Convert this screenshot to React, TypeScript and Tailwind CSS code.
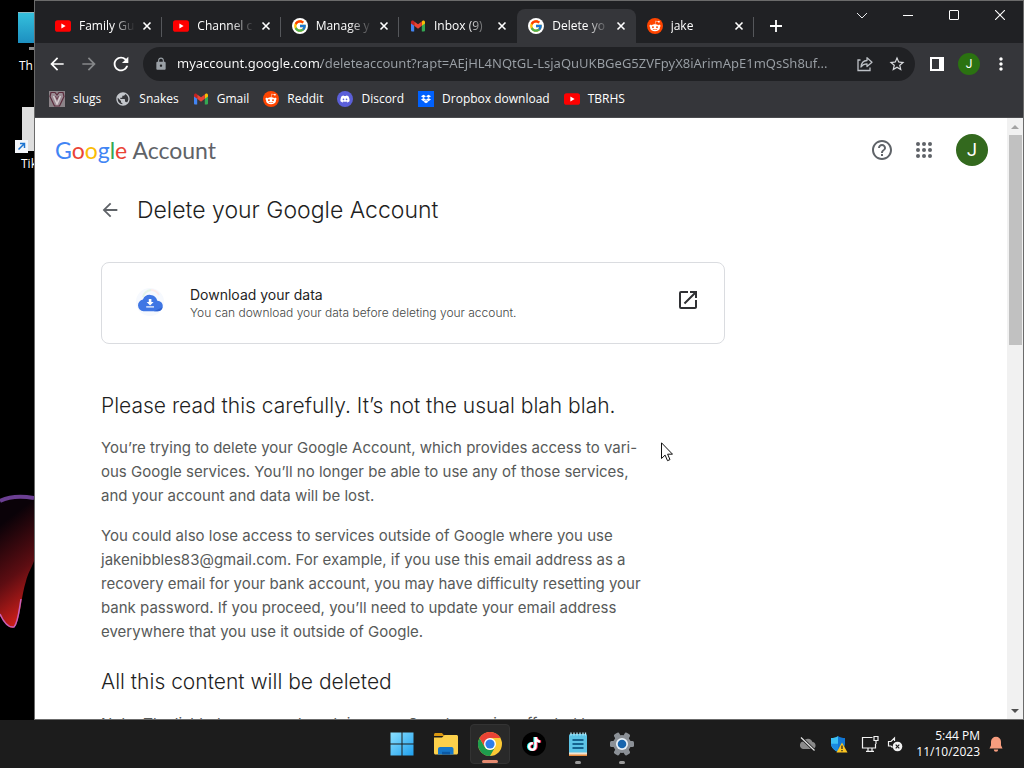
import { ReactNode } from 'react';
import { FcGoogle } from 'react-icons/fc';
import { FaDiscord, FaDropbox, FaTiktok, FaRedditAlien } from 'react-icons/fa';
import {
  MdArrowBack,
  MdArrowForward,
  MdHelpOutline,
  MdLock,
  MdMoreVert,
  MdOpenInNew,
  MdPublic,
  MdRefresh,
  MdStarBorder,
} from 'react-icons/md';

/* ---------- Icons ---------- */

function YouTubeIcon() {
  return (
    <svg viewBox="0 0 16 16" className="w-4 h-4 shrink-0">
      <rect x="0" y="2.2" width="16" height="11.6" rx="2.6" fill="#f00" />
      <path d="M6.4 5.6v4.8L10.6 8z" fill="#fff" />
    </svg>
  );
}

function GmailIcon() {
  return (
    <svg viewBox="0 0 16 16" className="w-4 h-4 shrink-0">
      <path d="M1 4.2V12.6c0 .5.4.9.9.9h2.3V7.2z" fill="#4285f4" />
      <path d="M11.8 13.5h2.3c.5 0 .9-.4.9-.9V4.2l-3.2 3z" fill="#34a853" />
      <path d="M11.8 3.4v4.4L15 5.4V4.1c0-1.3-1.4-2-2.4-1.3z" fill="#fbbc04" />
      <path d="M4.2 7.8V3.4L8 6.3l3.8-2.9v4.4L8 10.7z" fill="#ea4335" />
      <path d="M1 4.1v1.3l3.2 2.4V3.4l-.8-.6C2.4 2.1 1 2.8 1 4.1z" fill="#c5221f" />
    </svg>
  );
}

function RedditIcon() {
  return (
    <span className="flex w-4 h-4 shrink-0 items-center justify-center rounded-full bg-[#ff4500]">
      <FaRedditAlien className="w-3 h-3 text-white" />
    </span>
  );
}

function GoogleIcon() {
  return (
    <span className="flex w-4 h-4 shrink-0 items-center justify-center rounded-full bg-white">
      <FcGoogle className="w-[14px] h-[14px]" />
    </span>
  );
}

function DiscordIcon() {
  return (
    <span className="flex w-4 h-4 shrink-0 items-center justify-center rounded-full bg-[#5b5fd9]">
      <FaDiscord className="w-[10px] h-[10px] text-white" />
    </span>
  );
}

function DropboxIcon() {
  return (
    <span className="flex w-4 h-4 shrink-0 items-center justify-center bg-[#0061fe]">
      <FaDropbox className="w-[10px] h-[10px] text-white" />
    </span>
  );
}

function SlugsIcon() {
  return (
    <svg viewBox="0 0 16 16" className="w-4 h-4 shrink-0">
      <rect width="16" height="16" fill="#8b8388" />
      <path d="M2 1.5h4L8 4l2-2.5h4l1 4L10.5 15h-5L1 5.5z" fill="#9a8c94" stroke="#5c2c3c" strokeWidth="1.2" />
      <path d="M4.5 5 8 13l3.5-8" fill="none" stroke="#d8ccd0" strokeWidth="1.5" />
      <path d="M6.5 5 8 8.5 9.5 5" fill="none" stroke="#6e3f50" />
    </svg>
  );
}

function CloseIcon() {
  return (
    <svg viewBox="0 0 10 10" className="w-[10px] h-[10px]">
      <path d="M1.5 1.5l7 7M8.5 1.5l-7 7" stroke="#fff" strokeWidth="1.6" />
    </svg>
  );
}

function ShareIcon() {
  return (
    <svg viewBox="0 0 16 16" className="w-4 h-4" fill="none" stroke="#bdc1c6" strokeWidth="1.3">
      <path d="M3.5 4H1v10.5h12V11.5" />
      <path d="M10 1.8v2.7C6.5 4.7 4.3 7 4 11c1.5-2.3 3.3-3.2 6-3.2v2.7L15 6.2z" strokeLinejoin="round" />
    </svg>
  );
}

function CloudDownloadIcon() {
  return (
    <svg viewBox="0 0 40 40" className="w-10 h-10 shrink-0">
      <circle cx="20" cy="19" r="14" fill="#f6f9fe" />
      <path d="M13 14a9.5 9.5 0 0 1 8-7" fill="none" stroke="#e5f5e8" strokeWidth="2" />
      <path d="M21 7a9.5 9.5 0 0 1 8 5" fill="none" stroke="#fdeceb" strokeWidth="2" />
      <path d="M13.5 28.2a5.9 5.9 0 0 1-.6-11.7 7.6 7.6 0 0 1 14.4 1.3h.3a5.2 5.2 0 0 1 0 10.4z" fill="#3f76e4" />
      <path d="M24 28.2h3.6a5.2 5.2 0 0 0 5-4z" fill="#2f62cf" />
      <path d="M18.8 16h2.6v3h2.2L20.1 22.5 16.6 19h2.2z" fill="#fff" />
      <path d="M16.2 23.9h7.8" stroke="#fff" strokeWidth="1.2" />
    </svg>
  );
}

function AppsIcon() {
  return (
    <svg viewBox="0 0 24 24" className="w-6 h-6" fill="#5f6368">
      {[6, 12, 18].map((y) => [6, 12, 18].map((x) => <circle key={`${x}-${y}`} cx={x} cy={y} r="2" />))}
    </svg>
  );
}

function WindowsIcon() {
  return (
    <svg viewBox="0 0 24 24" className="w-6 h-6">
      <defs>
        <linearGradient id="win" x1="0" y1="0" x2="1" y2="1">
          <stop offset="0" stopColor="#8be0ff" />
          <stop offset="1" stopColor="#1fa0ee" />
        </linearGradient>
      </defs>
      <path d="M.5.5h11v11H.5zM12.5.5h11v11h-11zM.5 12.5h11v11H.5zM12.5 12.5h11v11h-11z" fill="url(#win)" />
    </svg>
  );
}

function FolderIcon() {
  return (
    <svg viewBox="0 0 24 24" className="w-6 h-6">
      <path d="M0 2.5C0 1.7.7 1 1.5 1H8l2.5 3H0z" fill="#d9960f" />
      <path d="M0 5.5h8L10.5 3H22.5c.8 0 1.5.7 1.5 1.5V21c0 .8-.7 1.5-1.5 1.5h-21C.7 22.5 0 21.8 0 21z" fill="#fcd04b" />
      <path d="M4 22.5V17c0-1.1.9-2 2-2h11.5c1.1 0 2 .9 2 2v5.5z" fill="#1677c9" />
      <path d="M8 22.5v-2.7h8v2.7z" fill="#0c59a4" />
    </svg>
  );
}

function ChromeIcon() {
  return (
    <svg viewBox="0 0 24 24" className="w-6 h-6">
      <circle cx="12" cy="12" r="12" fill="#fcc934" />
      <path d="M1.6 6A12 12 0 0 1 22.4 6H12z" fill="#ea4335" />
      <path d="M1.6 6a12 12 0 0 0 10.4 18l5.2-9a6 6 0 0 1-10.4 0z" fill="#1e9d4d" />
      <path d="M1.6 6 6.8 15 12 6z" fill="#ea4335" />
      <circle cx="12" cy="12" r="6" fill="#fff" />
      <circle cx="12" cy="12" r="4.6" fill="#2f7de9" />
    </svg>
  );
}

function TikTokIcon() {
  return (
    <span className="relative flex w-6 h-6 items-center justify-center rounded-full bg-black">
      <FaTiktok className="absolute w-[14px] h-[14px] -translate-x-px text-[#25f4ee]" />
      <FaTiktok className="absolute w-[14px] h-[14px] translate-x-px text-[#fe2c55]" />
      <FaTiktok className="absolute w-[14px] h-[14px] text-white" />
    </span>
  );
}

function NotepadIcon() {
  return (
    <svg viewBox="0 0 24 24" className="w-6 h-6">
      <rect x="3" y="2" width="18" height="21" rx="1.5" fill="#5cc4e6" />
      <path d="M3 20.5h18V23c0 .6-.4 1-1 1H4c-.6 0-1-.4-1-1z" fill="#f1e3d0" />
      <path d="M3 22.5h18V24H3z" fill="#e88b3c" />
      <path d="M6.5 8h11M6.5 12h11M6.5 16h11" stroke="#15638f" strokeWidth="1.8" />
      <path d="M5 .5v3M8 .5v3M11 .5v3M14 .5v3M17 .5v3M19.5.5v3" stroke="#b5e9f8" strokeWidth="1.3" />
    </svg>
  );
}

function SettingsIcon() {
  return (
    <svg viewBox="0 0 24 24" className="w-6 h-6">
      <g fill="#8b9096">
        <rect x="9" y="0" width="6" height="24" rx="1.5" transform="rotate(30 12 12)" />
        <rect x="9" y="0" width="6" height="24" rx="1.5" transform="rotate(90 12 12)" />
        <rect x="9" y="0" width="6" height="24" rx="1.5" transform="rotate(150 12 12)" />
        <circle cx="12" cy="12" r="9" />
      </g>
      <circle cx="12" cy="12" r="6" fill="#e8f1f8" />
      <circle cx="12" cy="12" r="4.3" fill="#1765ad" />
    </svg>
  );
}

function CloudOffIcon() {
  return (
    <svg viewBox="0 0 18 16" className="w-[18px] h-4">
      <path d="M4 13a3.8 3.8 0 0 1 .3-7.5A5 5 0 0 1 13.5 6a3.6 3.6 0 0 1 .5 7z" fill="#8a8a8a" />
      <path d="M2 1.5 15.5 14.5" stroke="#1c1c1c" strokeWidth="3" />
      <path d="M2 1.5 15.5 14.5" stroke="#e6e6e6" strokeWidth="1.2" />
    </svg>
  );
}

function DefenderIcon() {
  return (
    <svg viewBox="0 0 18 18" className="w-[18px] h-[18px]">
      <path d="M8 1c2 1.6 4.5 2 7 2v5.5c0 4-3 6.5-7 8.5z" fill="#1176d4" />
      <path d="M8 1C6 2.6 3.5 3 1 3v5.5C1 12.5 4 15 8 17z" fill="#3cc1f4" />
      <path d="M1 8.8h7V17C4.5 15.3 1.3 12.7 1 8.8z" fill="#1a8ae0" />
      <path d="M12 7.5 17.5 17.5h-11z" fill="#fcc521" />
      <path d="M12 10.5v3.5M12 15v1.3" stroke="#222" strokeWidth="1.3" />
    </svg>
  );
}

function NetworkIcon() {
  return (
    <svg viewBox="0 0 18 18" className="w-[18px] h-[18px]" fill="none" stroke="#f2f2f2" strokeWidth="1.2">
      <path d="M11.5 2.5h-10v10.5h13V9M5 16.4h8M7 13v3M11 13v3" />
      <path d="M13 1.5h4v4h-4zM15 5.5V9" />
    </svg>
  );
}

function MutedIcon() {
  return (
    <svg viewBox="0 0 16 16" className="w-4 h-4">
      <path d="M7.5 5V2L4 5.5H1.5v4.5H4l1.5 1.5" fill="none" stroke="#f2f2f2" strokeWidth="1.2" />
      <circle cx="10.5" cy="10.5" r="4.8" fill="#f2f2f2" />
      <path d="M8.7 8.7l3.6 3.6M12.3 8.7l-3.6 3.6" stroke="#1c1c1c" strokeWidth="1.2" />
    </svg>
  );
}

function BellIcon() {
  return (
    <svg viewBox="0 0 16 16" className="w-4 h-4" fill="#f79d7f">
      <path d="M8 .8a5 5 0 0 0-5 5v3.5L1.5 12.5h13L13 9.3V5.8a5 5 0 0 0-5-5zM5.8 13.5h4.4a2.2 2.2 0 0 1-4.4 0z" />
    </svg>
  );
}

/* ---------- Data ---------- */

const tabs = [
  { title: 'Family Gu', icon: <YouTubeIcon /> },
  { title: 'Channel c', icon: <YouTubeIcon /> },
  { title: 'Manage y', icon: <GoogleIcon /> },
  { title: 'Inbox (9)', icon: <GmailIcon /> },
  { title: 'Delete yo', icon: <GoogleIcon />, active: true },
  { title: 'jake', icon: <RedditIcon /> },
];

const bookmarks = [
  { name: 'slugs', icon: <SlugsIcon /> },
  { name: 'Snakes', icon: <MdPublic className="w-4 h-4 shrink-0 text-[#c4c7cc]" /> },
  { name: 'Gmail', icon: <GmailIcon /> },
  { name: 'Reddit', icon: <RedditIcon /> },
  { name: 'Discord', icon: <DiscordIcon /> },
  { name: 'Dropbox download', icon: <DropboxIcon /> },
  { name: 'TBRHS', icon: <YouTubeIcon /> },
];

const taskbarApps = [
  { name: 'Start', icon: <WindowsIcon /> },
  { name: 'File Explorer', icon: <FolderIcon /> },
  { name: 'Google Chrome', icon: <ChromeIcon />, state: 'active' },
  { name: 'TikTok', icon: <TikTokIcon /> },
  { name: 'Notepad', icon: <NotepadIcon />, state: 'open' },
  { name: 'Settings', icon: <SettingsIcon />, state: 'open' },
];

/* ---------- Parts ---------- */

function IconButton({ label, children }: { label: string; children: ReactNode }) {
  return (
    <button aria-label={label} className="flex w-8 h-8 shrink-0 items-center justify-center">
      {children}
    </button>
  );
}

function Desktop() {
  return (
    <aside className="relative w-[34px] shrink-0 overflow-hidden bg-black text-xs text-white">
      <div className="absolute left-[18px] top-3 w-10 h-[31px] bg-gradient-to-b from-[#35c0dc] to-[#1d8fc0] border-t border-[#8fb9c2]" />
      <div className="absolute left-[29px] top-[47px] w-5 h-[3px] bg-[#8d8d8d]" />
      <span className="absolute left-[19px] top-[58px] whitespace-nowrap">Th</span>
      <div className="absolute left-[22px] top-[107px] w-8 h-[44px] bg-[#dedede]" />
      <svg viewBox="0 0 13 13" className="absolute left-[15px] top-[140px] w-[13px] h-[13px]">
        <rect width="13" height="13" fill="#f3f6fa" />
        <path d="M3.5 9.5 9 4M5 3.5h4.5V8" fill="none" stroke="#1a73d0" strokeWidth="1.5" />
      </svg>
      <span className="absolute left-[21px] top-[156px] whitespace-nowrap">Tik</span>
      <svg viewBox="0 0 34 150" className="absolute left-0 top-[485px] w-[34px] h-[150px]">
        <defs>
          <linearGradient id="petal" x1="0.3" y1="0" x2="0.5" y2="1">
            <stop offset="0.15" stopColor="#0a0208" />
            <stop offset="0.6" stopColor="#5d0d12" />
            <stop offset="1" stopColor="#d8201a" />
          </linearGradient>
        </defs>
        <path d="M0 16C10 11 22 11 34 13V76C31 84 28 88 26 96 21 112 21 128 16 140 10 148 5 137 0 131z" fill="url(#petal)" />
        <path d="M0 16C10 11 22 11 34 13" fill="none" stroke="#6b3f92" strokeWidth="4" />
        <path d="M0 129C4 138 8 143 14 142 18 138 19 126 21 114" fill="none" stroke="#c760b8" strokeWidth="1.5" />
      </svg>
    </aside>
  );
}

function TabStrip() {
  return (
    <div className="flex h-[42px] items-stretch bg-[#202124] pl-[9px]">
      <div className="flex w-[710px] pt-2" role="tablist">
        {tabs.map((tab, i) => (
          <div
            key={i}
            role="tab"
            aria-selected={!!tab.active}
            className={`relative flex flex-1 min-w-0 items-center pl-[11px] pr-[7px] ${
              tab.active ? 'rounded-t-lg bg-[#35363a]' : ''
            }`}
          >
            {tab.icon}
            <span className="ml-2 flex-1 min-w-0 overflow-hidden whitespace-nowrap [mask-image:linear-gradient(to_right,black_60%,transparent)]">
              {tab.title}
            </span>
            <button aria-label="Close tab" className="ml-1 flex w-4 h-4 shrink-0 items-center justify-center">
              <CloseIcon />
            </button>
            {!tab.active && !tabs[i + 1]?.active && (
              <span className="absolute right-0 top-2 h-5 w-px bg-[#55575b]" />
            )}
          </div>
        ))}
      </div>
      <button aria-label="New tab" className="ml-2 mt-2 flex w-7 items-center justify-center">
        <svg viewBox="0 0 12 12" className="w-3 h-3">
          <path d="M6 0v12M0 6h12" stroke="#fff" strokeWidth="1.8" />
        </svg>
      </button>
      <div className="ml-auto flex h-7 items-center">
        <button aria-label="Search tabs" className="flex w-[46px] justify-center">
          <svg viewBox="0 0 10 10" className="w-[10px] h-[10px]">
            <path d="M0 3l5 5 5-5" fill="none" stroke="#e8eaed" />
          </svg>
        </button>
        <button aria-label="Minimize" className="flex w-[46px] justify-center">
          <span className="h-px w-[10px] bg-white" />
        </button>
        <button aria-label="Maximize" className="flex w-[46px] justify-center">
          <span className="w-[10px] h-[10px] rounded-[1px] border border-white" />
        </button>
        <button aria-label="Close" className="flex w-[46px] justify-center">
          <svg viewBox="0 0 10 10" className="w-[10px] h-[10px]">
            <path d="M0 0l10 10M10 0L0 10" stroke="#fff" strokeWidth="1.1" />
          </svg>
        </button>
      </div>
    </div>
  );
}

function Toolbar() {
  return (
    <div className="flex h-[42px] items-center px-[6px] text-white">
      <IconButton label="Back">
        <MdArrowBack className="w-5 h-5" />
      </IconButton>
      <IconButton label="Forward">
        <MdArrowForward className="w-5 h-5 text-[#86888a]" />
      </IconButton>
      <IconButton label="Reload">
        <MdRefresh className="w-[22px] h-[22px]" />
      </IconButton>
      <div className="mx-[6px] flex h-[34px] flex-1 min-w-0 items-center rounded-full bg-[#202124] pl-[11px] pr-[2px]">
        <MdLock className="w-[14px] h-[14px] shrink-0 text-[#9aa0a6]" />
        <input
          aria-label="Address"
          readOnly
          value="myaccount.google.com/deleteaccount?rapt=AEjHL4NQtGL-LsjaQuUKBGeG5ZVFpyX8iArimApE1mQsSh8uf..."
          className="ml-[9px] mr-1 flex-1 min-w-0 bg-[linear-gradient(to_right,#ffffff_144px,#9aa0a6_144px)] bg-clip-text font-['Noto_Sans'] text-[13px] text-transparent outline-none"
        />
        <IconButton label="Share">
          <ShareIcon />
        </IconButton>
        <IconButton label="Bookmark this page">
          <MdStarBorder className="w-[18px] h-[18px] text-[#dadce0]" />
        </IconButton>
      </div>
      <IconButton label="Side panel">
        <span className="w-[14px] h-[14px] border-2 border-r-[5px] border-white" />
      </IconButton>
      <IconButton label="Profile">
        <span className="flex w-[22px] h-[22px] items-center justify-center rounded-full bg-[#2b7211] font-[Roboto] text-xs">J</span>
      </IconButton>
      <IconButton label="Menu">
        <MdMoreVert className="w-5 h-5" />
      </IconButton>
    </div>
  );
}

function BookmarksBar() {
  return (
    <nav className="flex h-8 items-start gap-[14px] pl-[14px] pt-[6px]">
      {bookmarks.map((b) => (
        <a key={b.name} href="#" className="flex items-center gap-2 whitespace-nowrap">
          {b.icon}
          <span>{b.name}</span>
        </a>
      ))}
    </nav>
  );
}

function AccountPage() {
  return (
    <main className="relative flex-1 min-w-0 overflow-hidden bg-white font-[Inter,sans-serif] text-[#575a59]">
      <header className="flex h-16 items-center pl-5 pr-[19px]">
        <a href="#" className="font-[Lato] text-[23px] text-[#5f6368]">
          <span className="text-[#4285f4]">G</span>
          <span className="text-[#ea4335]">o</span>
          <span className="text-[#fbbc05]">o</span>
          <span className="text-[#4285f4]">g</span>
          <span className="text-[#34a853]">l</span>
          <span className="text-[#ea4335]">e</span> Account
        </a>
        <button aria-label="Help" className="ml-auto text-[#5f6368]">
          <MdHelpOutline className="w-6 h-6" />
        </button>
        <button aria-label="Google apps" className="ml-[18px]">
          <AppsIcon />
        </button>
        <button className="ml-5 w-8 h-8 rounded-full bg-[#33691e] font-[Roboto] text-lg text-white">J</button>
      </header>

      <div className="px-[66px]">
        <div className="flex h-14 items-center gap-4">
          <button aria-label="Back">
            <MdArrowBack className="w-[22px] h-[22px] -ml-[2px] text-[#5f6368]" />
          </button>
          <h1 className="text-[23px] font-light text-[#1f1f1f]">Delete your Google Account</h1>
        </div>

        <a href="#" className="mt-6 flex h-[82px] max-w-[624px] items-center rounded-lg border border-[#dadce0] pl-7 pr-6">
          <CloudDownloadIcon />
          <div className="ml-5 flex-1 pt-[2px]">
            <p className="text-sm leading-[18px] text-[#1f1f1f]">Download your data</p>
            <p className="text-xs font-light leading-[18px] text-[#444746]">You can download your data before deleting your account.</p>
          </div>
          <MdOpenInNew className="w-6 h-6 mb-[6px] text-[#303134]" />
        </a>

        <h2 className="mt-[46px] text-[21px] font-light leading-8 text-[#1f1f1f]">
          Please read this carefully. It’s not the usual blah blah.
        </h2>
        <p className="mt-[14px] text-[15px] leading-6 whitespace-nowrap">
          You’re trying to delete your Google Account, which provides access to vari-
          <br />
          ous Google services. You’ll no longer be able to use any of those services,
          <br />
          and your account and data will be lost.
        </p>
        <p className="mt-4 text-[15px] leading-6 whitespace-nowrap">
          You could also lose access to services outside of Google where you use
          <br />
          jakenibbles83@gmail.com. For example, if you use this email address as a
          <br />
          recovery email for your bank account, you may have difficulty resetting your
          <br />
          bank password. If you proceed, you’ll need to update your email address
          <br />
          everywhere that you use it outside of Google.
        </p>
        <h2 className="mt-[22px] text-[21px] font-light leading-8 text-[#1f1f1f]">
          All this content will be deleted
        </h2>
        <p className="mt-[14px] text-[15px] leading-6 whitespace-nowrap">
          Note: The list below may not contain every Google service affected by
        </p>
      </div>

      <svg viewBox="0 0 12 20" className="absolute left-[626px] top-[324px] w-3 h-5">
        <path d="M.5.8v15.7l3.6-3.4 2.4 5.6 2.5-1.1-2.4-5.4h4.9z" fill="#fff" stroke="#111" />
      </svg>
    </main>
  );
}

function Scrollbar() {
  return (
    <div className="flex w-4 shrink-0 flex-col items-center bg-[#f1f1f1]">
      <div className="flex h-[17px] items-center">
        <div className="border-x-4 border-b-4 border-x-transparent border-b-[#a3a3a3]" />
      </div>
      <div className="h-[210px] w-[13px] bg-[#c1c1c1]" />
      <div className="mt-auto flex h-[17px] items-center">
        <div className="border-x-4 border-t-4 border-x-transparent border-t-[#505050]" />
      </div>
    </div>
  );
}

function Taskbar() {
  return (
    <footer className="grid h-12 shrink-0 grid-cols-[1fr_auto_1fr] items-center bg-[#1c1c1c] text-white">
      <div className="col-start-2 flex gap-1">
        {taskbarApps.map((app) => (
          <button
            key={app.name}
            aria-label={app.name}
            className={`relative flex w-10 h-10 items-center justify-center rounded ${
              app.state === 'active' ? 'border border-[#333] bg-[#292929]' : ''
            }`}
          >
            {app.icon}
            {app.state === 'active' && <span className="absolute bottom-0 h-[3px] w-4 rounded-full bg-[#e58a70]" />}
            {app.state === 'open' && <span className="absolute bottom-0 h-[3px] w-[6px] rounded-full bg-[#9a9a9a]" />}
          </button>
        ))}
      </div>
      <div className="flex items-center justify-end gap-[13px] pr-5">
        <CloudOffIcon />
        <DefenderIcon />
        <div className="flex items-center gap-2">
          <NetworkIcon />
          <MutedIcon />
        </div>
        <div className="flex items-center gap-2">
          <time className="text-right text-xs leading-4">
            5:44 PM
            <br />
            11/10/2023
          </time>
          <BellIcon />
        </div>
      </div>
    </footer>
  );
}

export default function App() {
  return (
    <div className="flex h-screen flex-col overflow-hidden bg-black font-['Open_Sans','Noto_Sans',sans-serif] text-xs">
      <div className="flex flex-1 min-h-0">
        <Desktop />
        <div className="flex flex-1 min-w-0 flex-col border border-[#6b6b6b] bg-[#35363a] text-white">
          <TabStrip />
          <Toolbar />
          <BookmarksBar />
          <div className="flex flex-1 min-h-0 border-t border-[#4a4b4e]">
            <AccountPage />
            <Scrollbar />
          </div>
        </div>
      </div>
      <Taskbar />
    </div>
  );
}
